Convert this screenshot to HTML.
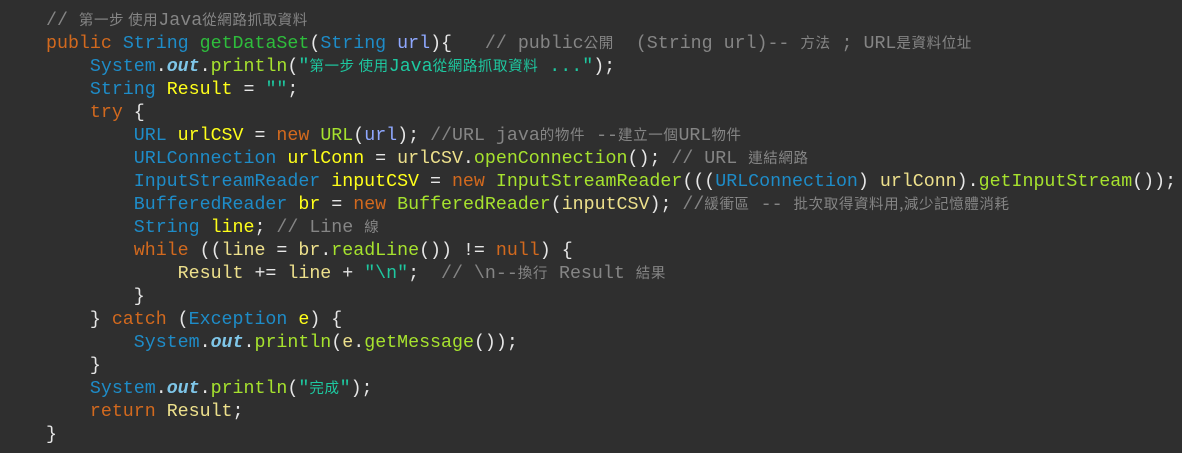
<!DOCTYPE html><html><head><meta charset="utf-8"><style>
body{margin:0;background:#2f2f2f;width:1182px;height:453px;overflow:hidden}
pre{margin:0;padding:10px 0 0 46px;font-family:"Liberation Mono","Noto Sans CJK TC",monospace;font-size:18.3px;line-height:23px;color:#e6e6e6}
.k{color:#d2691e}.t{color:#1e8cc8}.m{color:#2ebd3c}.f{color:#a6e22e}.v{color:#ffff1a}.w{color:#ede08c}.s{color:#1ec8a0}.c{color:#858585}.p{color:#8fa8ff}.o{color:#7fc6e8;font-style:italic;font-weight:bold}
.z{font-size:14.5px;letter-spacing:0.6px;line-height:1;font-family:"Noto Sans CJK TC",sans-serif}
</style></head><body><pre><span class="c">// <span class="z">第一步 使用</span>Java<span class="z">從網路抓取資料</span></span>
<span class="k">public</span> <span class="t">String</span> <span class="m">getDataSet</span>(<span class="t">String</span> <span class="p">url</span>){   <span class="c">// public<span class="z">公開</span>  (String url)-- <span class="z">方法</span> ; URL<span class="z">是資料位址</span></span>
    <span class="t">System</span>.<span class="o">out</span>.<span class="f">println</span>(<span class="s">"<span class="z">第一步 使用</span>Java<span class="z">從網路抓取資料</span> ..."</span>);
    <span class="t">String</span> <span class="v">Result</span> = <span class="s">""</span>;
    <span class="k">try</span> {
        <span class="t">URL</span> <span class="v">urlCSV</span> = <span class="k">new</span> <span class="f">URL</span>(<span class="p">url</span>); <span class="c">//URL java<span class="z">的物件</span> --<span class="z">建立一個</span>URL<span class="z">物件</span></span>
        <span class="t">URLConnection</span> <span class="v">urlConn</span> = <span class="w">urlCSV</span>.<span class="f">openConnection</span>(); <span class="c">// URL <span class="z">連結網路</span></span>
        <span class="t">InputStreamReader</span> <span class="v">inputCSV</span> = <span class="k">new</span> <span class="f">InputStreamReader</span>(((<span class="t">URLConnection</span>) <span class="w">urlConn</span>).<span class="f">getInputStream</span>());
        <span class="t">BufferedReader</span> <span class="v">br</span> = <span class="k">new</span> <span class="f">BufferedReader</span>(<span class="w">inputCSV</span>); <span class="c">//<span class="z">緩衝區</span> -- <span class="z">批次取得資料用,減少記憶體消耗</span></span>
        <span class="t">String</span> <span class="v">line</span>; <span class="c">// Line <span class="z">線</span></span>
        <span class="k">while</span> ((<span class="w">line</span> = <span class="w">br</span>.<span class="f">readLine</span>()) != <span class="k">null</span>) {
            <span class="w">Result</span> += <span class="w">line</span> + <span class="s">"\n"</span>;  <span class="c">// \n--<span class="z">換行</span> Result <span class="z">結果</span></span>
        }
    } <span class="k">catch</span> (<span class="t">Exception</span> <span class="v">e</span>) {
        <span class="t">System</span>.<span class="o">out</span>.<span class="f">println</span>(<span class="w">e</span>.<span class="f">getMessage</span>());
    }
    <span class="t">System</span>.<span class="o">out</span>.<span class="f">println</span>(<span class="s">"<span class="z">完成</span>"</span>);
    <span class="k">return</span> <span class="w">Result</span>;
}</pre></body></html>
